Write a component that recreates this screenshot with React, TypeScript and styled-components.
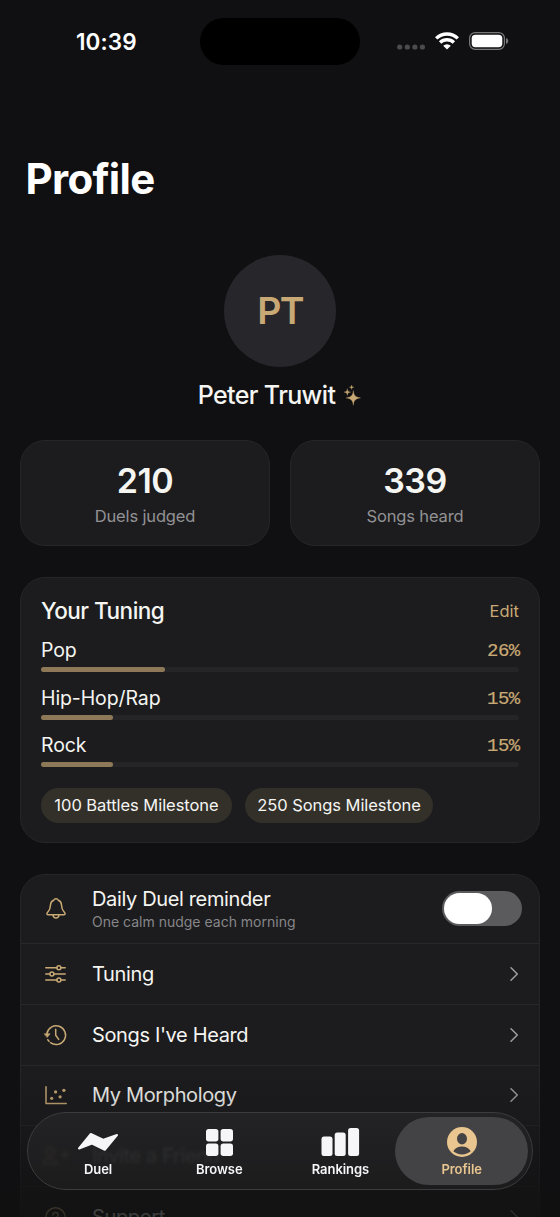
import React from "react";
import styled, { createGlobalStyle } from "styled-components";

const Global = createGlobalStyle`
  * { box-sizing: border-box; }
  html, body { margin: 0; padding: 0; background: #101012; }
  body { font-family: Inter, "Liberation Sans", sans-serif; color: #f5f5f2; overflow: hidden; }
  svg { display: block; flex: none; overflow: visible; }
`;

const gold = "#c8a975";

const Screen = styled.div`
  position: relative;
  width: 560px;
  height: 1217px;
  overflow: hidden;
  background: #101012;
  display: flex;
  flex-direction: column;
`;

const StatusBar = styled.header`
  flex: none;
  height: 82px;
  display: flex;
  align-items: center;
  padding: 0 52px 0 76px;
`;

const Clock = styled.div`
  width: 124px;
  font-size: 22.5px;
  font-weight: 600;
  letter-spacing: 0.1px;
  color: #fff;
  white-space: nowrap;
`;

const Island = styled.div`
  width: 160px;
  height: 47px;
  border-radius: 24px;
  background: #000;
`;

const StatusIcons = styled.div`
  width: 111px;
  margin-left: auto;
  display: flex;
  align-items: center;
  gap: 10px;
`;

const Title = styled.h1`
  flex: none;
  margin: 72px 0 0 25.5px;
  font-size: 42px;
  line-height: 50px;
  font-weight: 700;
  letter-spacing: -0.7px;
  color: #fff;
`;

const Identity = styled.section`
  flex: none;
  display: flex;
  flex-direction: column;
  align-items: center;
  margin-top: 50.5px;
`;

const Avatar = styled.div`
  width: 112px;
  height: 112px;
  border-radius: 50%;
  background: #27262b;
  color: ${gold};
  display: flex;
  align-items: center;
  justify-content: center;
  font-size: 37.5px;
  font-weight: 600;
  letter-spacing: -1.8px;
`;

const NameRow = styled.div`
  margin-top: 11.5px;
  margin-right: 1px;
  height: 34px;
  display: flex;
  align-items: center;
  gap: 9px;
`;

const Name = styled.span`
  font-size: 25px;
  line-height: 34px;
  font-weight: 500;
  letter-spacing: -0.62px;
  white-space: nowrap;
`;

const Card = styled.section`
  background: #1c1c1e;
  border: 1px solid #262628;
  border-radius: 25px;
`;

const Stats = styled.div`
  flex: none;
  display: grid;
  grid-template-columns: 1fr 1fr;
  gap: 20px;
  margin: 28px 20px 0;
`;

const StatCard = styled(Card)`
  height: 106px;
  padding-top: 19px;
  text-align: center;
`;

const StatValue = styled.div`
  font-size: 34px;
  line-height: 42px;
  font-weight: 600;
  letter-spacing: -0.5px;
`;

const StatLabel = styled.div`
  margin-top: 3px;
  font-size: 16.5px;
  line-height: 22px;
  letter-spacing: -0.15px;
  color: #929295;
`;

const TuningCard = styled(Card)`
  flex: none;
  height: 266px;
  margin: 31px 20px 0;
  padding: 17px 20px 0;
`;

const TuningHeader = styled.div`
  display: flex;
  align-items: center;
  justify-content: space-between;
  height: 31px;
  margin-bottom: 10px;
`;

const Heading = styled.h2`
  margin: 0;
  font-size: 22.5px;
  font-weight: 500;
  letter-spacing: -0.5px;
`;

const EditLink = styled.span`
  font-size: 16.5px;
  color: ${gold};
`;

const Genre = styled.div`
  height: 47.5px;
`;

const GenreLine = styled.div`
  display: flex;
  justify-content: space-between;
  align-items: center;
  height: 28px;
  margin-bottom: 3px;
`;

const GenreName = styled.span`
  font-size: 19.5px;
  letter-spacing: -0.1px;
`;

const Percent = styled.span`
  font-family: "Liberation Mono", monospace;
  font-size: 19px;
  line-height: 24px;
  padding-top: 2px;
  letter-spacing: -0.6px;
  margin-right: -0.5px;
  color: ${gold};
  -webkit-text-stroke: 0.2px ${gold};
`;

const Track = styled.div`
  height: 5px;
  border-radius: 3px;
  background: #252527;
`;

const Fill = styled.div`
  height: 5px;
  border-radius: 3px;
  background: #8d7957;
`;

const Chips = styled.div`
  display: flex;
  gap: 13px;
  margin-top: 9px;
`;

const Chip = styled.span<{ $width: number }>`
  width: ${(p) => p.$width}px;
  height: 35px;
  border-radius: 18px;
  background: #33302a;
  display: flex;
  align-items: center;
  justify-content: center;
  font-size: 16.5px;
  letter-spacing: -0.05px;
  white-space: nowrap;
`;

const Menu = styled(Card)`
  flex: none;
  height: 400px;
  margin: 31px 20px 0;
`;

const MenuRow = styled.div<{ $height?: number }>`
  height: ${(p) => p.$height ?? 60.8}px;
  display: flex;
  align-items: center;
  padding: 0 20px 0 20px;
  border-bottom: 1px solid #28282a;
`;

const IconSlot = styled.div`
  width: 29px;
  margin-right: 22px;
  display: flex;
  justify-content: center;
`;

const RowText = styled.div`
  flex: 1;
`;

const RowLabel = styled.div`
  font-size: 20px;
  line-height: 26px;
  letter-spacing: -0.36px;
`;

const RowNote = styled.div`
  font-size: 14px;
  line-height: 20px;
  letter-spacing: 0;
  color: #868689;
`;

const Toggle = styled.div`
  width: 80px;
  height: 35px;
  margin: 0 -3px 2px 0;
  padding: 2px;
  border-radius: 18px;
  background: #5b5b5e;
`;

const Knob = styled.div`
  width: 48px;
  height: 31px;
  border-radius: 16px;
  background: #fff;
`;

const Fade = styled.div`
  position: absolute;
  left: 0;
  right: 0;
  bottom: 0;
  height: 147px;
  background: linear-gradient(rgba(16, 16, 17, 0), rgba(16, 16, 17, 0.2) 30%, rgba(16, 16, 17, 0.6) 65%, rgba(16, 16, 17, 0.82));
`;

const TabBar = styled.nav`
  position: absolute;
  left: 27px;
  top: 1112px;
  width: 506px;
  height: 78px;
  padding: 0 9.5px;
  border: 1px solid #3c3c3e;
  border-radius: 39px;
  background: linear-gradient(rgba(37, 37, 39, 0.9), rgba(29, 29, 30, 0.84));
  backdrop-filter: blur(1.5px);
  display: flex;
  align-items: center;
`;

const Tab = styled.div<{ $active?: boolean }>`
  flex: 0 0 ${(p) => (p.$active ? 133.2 : 121.2)}px;
  height: 68px;
  margin: ${(p) => (p.$active ? "0 -6px" : "0")};
  border-radius: 34px;
  background: ${(p) => (p.$active ? "#434345" : "transparent")};
  color: ${(p) => (p.$active ? "#e9c58f" : "#f6f6f8")};
  display: flex;
  flex-direction: column;
  align-items: center;
  padding-top: 9px;
`;

const TabIcon = styled.div`
  height: 32px;
  display: flex;
  align-items: center;
`;

const TabLabel = styled.span`
  margin-top: 2px;
  font-size: 13px;
  line-height: 18px;
  font-weight: 600;
  letter-spacing: -0.05px;
`;

const stroke = { fill: "none", stroke: gold, strokeWidth: 1.5, strokeLinecap: "round", strokeLinejoin: "round" } as const;

const SignalDots = () => (
  <svg width="28" height="20" viewBox="0 0 28 20" fill="#4b4b4d">
    {[2.7, 10.3, 17.9, 25.4].map((x) => <circle key={x} cx={x} cy="16" r="2.6" />)}
  </svg>
);

const Wifi = () => (
  <svg width="24" height="18" viewBox="0 0 24 18" fill="none" stroke="#fff" strokeWidth="3.4">
    <path d="M1.2 6.4a15.5 15.5 0 0 1 21.6 0" />
    <path d="M5.1 10.5a9.9 9.9 0 0 1 13.8 0" />
    <path d="M8.2 13.8a5.2 5.2 0 0 1 7.6 0L12 17.6Z" fill="#fff" stroke="none" />
  </svg>
);

const Battery = () => (
  <svg width="40" height="18" viewBox="0 0 40 18">
    <rect x=".6" y=".6" width="34.8" height="16.8" rx="5.6" fill="none" stroke="#78787a" strokeWidth="1.2" />
    <rect x="2.7" y="2.7" width="30.6" height="12.6" rx="3.7" fill="#fff" />
    <path d="M37 6v6c1.5-.5 2.2-1.6 2.2-3S38.5 6.5 37 6Z" fill="#78787a" />
  </svg>
);

const Sparkles = () => (
  <svg width="17" height="21" viewBox="0 0 17 21" fill={gold} stroke={gold} strokeWidth=".3">
    <path d="M9.3 5.5C9.9 10.5 11 12 16.500 12.9C11 13.8 9.9 15.3 9.3 20.3C8.7 15.3 7.6 13.8 2.1 12.9C7.6 12 8.7 10.500 9.3 5.5Z" />
    <path d="M3.3 3.7C3.6 6 4.1 6.7 6.6 7.1C4.1 7.5 3.6 8.2 3.3 10.5C3 8.2 2.5 7.5 0 7.1C2.5 6.7 3 6 3.3 3.7Z" />
    <path d="M7.6 0C7.8 1.5 8.2 2 9.8 2.2C8.2 2.4 7.8 2.9 7.6 4.4C7.4 2.9 7 2.4 5.4 2.2C7 2 7.4 1.5 7.6 0Z" />
  </svg>
);

const Bell = () => (
  <svg width="20" height="21" viewBox="0 0 20 21" {...stroke}>
    <g transform="translate(0 -1)">
      <path d="M10 .8C8.7.8 8 1.4 7.7 2.2 5.6 3 4.6 4.700 4.500 7c-.2 3.2-.6 4.8-2.3 6.5-.8.8-1.300 1.500-1.300 2.300 0 .6.500.9 1.100.9h16c.6 0 1.100-.3 1.100-.9 0-.8-.5-1.500-1.300-2.300-1.700-1.700-2.100-3.300-2.300-6.500-.1-2.300-1.100-4-3.200-4.800C12 1.400 11.300.8 10 .8Z" />
      <path d="M7 17c.2 1.900 1.400 3.100 3 3.100s2.800-1.200 3-3.100" />
    </g>
  </svg>
);

const Sliders = () => (
  <svg width="21" height="18" viewBox="0 0 21 18" {...stroke}>
    <path d="M.8 2.7h11M16 2.7h4.2M.8 8.9h4M9 8.9h11.2M.8 15.1h11M16 15.1h4.2" />
    <circle cx="13.9" cy="2.7" r="2" />
    <circle cx="6.9" cy="8.9" r="2" />
    <circle cx="13.9" cy="15.1" r="2" />
  </svg>
);

const History = () => (
  <svg width="22" height="22" viewBox="0 0 22 22" {...stroke}>
    <g transform="translate(-.7 0)">
      <path d="M2.6 9.5A9.4 9.4 0 1 1 6.2 18.7M4.7 17.3 3.5 15.7" />
      <path d="M11.4 5.3v5.9l3 4.2" />
      <path d="M.2 9.8h5.6l-2.8 3.5Z" fill={gold} strokeWidth=".6" />
    </g>
  </svg>
);

const Scatter = () => (
  <svg width="22" height="19" viewBox="0 0 22 19">
    <path d="M1 .8v16.8h20.2" {...stroke} />
    <g fill={gold}>
      <circle cx="6.7" cy="12.3" r="1.6" />
      <circle cx="10.6" cy="5.9" r="1.6" />
      <circle cx="15.1" cy="10.8" r="1.6" />
      <circle cx="18.9" cy="4.3" r="1.6" />
    </g>
  </svg>
);

const Invite = () => (
  <svg width="28" height="20" viewBox="0 0 28 20" {...stroke} strokeWidth={2}>
    <circle cx="8" cy="6" r="4" />
    <path d="M1 18c0-7 14-7 14 0ZM19 9h8M23 5v8" />
  </svg>
);

const Help = () => (
  <svg width="21" height="21" viewBox="0 0 21 21" {...stroke}>
    <circle cx="10.5" cy="10.5" r="9.7" />
    <path d="M7.8 8c.2-3.3 5.4-3.2 5.4 0 0 2-2.7 2-2.7 4.2M10.5 15v.2" />
  </svg>
);

const Chevron = () => (
  <svg width="8" height="14" viewBox="0 0 8 14" fill="none" stroke="#a0a0a2" strokeWidth="1.5" strokeLinecap="round" strokeLinejoin="round">
    <path d="M0 .8 6.3 7 0 13.2" />
  </svg>
);

const DuelIcon = () => (
  <svg width="40" height="20" viewBox="0 0 40 20" fill="currentColor" stroke="currentColor" strokeWidth="2" strokeLinejoin="round">
    <path d="M1 16.5 12.8 2 25.5 7.8 39 3 26.8 17.800 14 11.5Z" />
  </svg>
);

const BrowseIcon = () => (
  <svg width="27" height="27" viewBox="0 0 27 27" fill="currentColor">
    {[0, 14.6].map((y) => [0, 14.6].map((x) => <rect key={`${x}${y}`} x={x} y={y} width="12.4" height="12.4" rx="2.7" />))}
  </svg>
);

const RankingsIcon = () => (
  <svg width="38" height="28" viewBox="0 0 38 28" fill="currentColor">
    <rect x="0.5" y="8.6" width="11" height="19.4" rx="2.5" />
    <rect x="13.7" y="4.4" width="11" height="23.6" rx="2.5" />
    <rect x="27.1" y="0" width="11" height="28" rx="2.5" />
  </svg>
);

const ProfileIcon = () => (
  <svg width="30" height="30" viewBox="0 0 30 30">
    <circle cx="15" cy="15" r="15" fill="currentColor" />
    <ellipse cx="15" cy="11.7" rx="5" ry="5.7" fill="#434345" />
    <path d="M6.3 24.3c1.5-3.3 4.8-4.8 8.7-4.8s7.2 1.5 8.7 4.8c-2.3 2-5.3 3.2-8.7 3.2s-6.4-1.2-8.7-3.2Z" fill="#434345" />
  </svg>
);

const genres = [
  { name: "Pop", share: 26 },
  { name: "Hip-Hop/Rap", share: 15 },
  { name: "Rock", share: 15 },
];

const links = [
  { label: "Tuning", Icon: Sliders },
  { label: "Songs I've Heard", Icon: History },
  { label: "My Morphology", Icon: Scatter },
  { label: "Invite a Friend", Icon: Invite },
  { label: "Support", Icon: Help },
];

const tabs = [
  { label: "Duel", Icon: DuelIcon },
  { label: "Browse", Icon: BrowseIcon },
  { label: "Rankings", Icon: RankingsIcon },
  { label: "Profile", Icon: ProfileIcon, active: true },
];

export default function App() {
  return (
    <Screen>
      <Global />
      <StatusBar>
        <Clock>10:39</Clock>
        <Island />
        <StatusIcons><SignalDots /><Wifi /><Battery /></StatusIcons>
      </StatusBar>
      <Title>Profile</Title>
      <Identity>
        <Avatar>PT</Avatar>
        <NameRow><Name>Peter Truwit</Name><Sparkles /></NameRow>
      </Identity>
      <Stats>
        <StatCard><StatValue>210</StatValue><StatLabel>Duels judged</StatLabel></StatCard>
        <StatCard><StatValue>339</StatValue><StatLabel>Songs heard</StatLabel></StatCard>
      </Stats>
      <TuningCard>
        <TuningHeader><Heading>Your Tuning</Heading><EditLink>Edit</EditLink></TuningHeader>
        {genres.map((g) => (
          <Genre key={g.name}>
            <GenreLine><GenreName>{g.name}</GenreName><Percent>{g.share}%</Percent></GenreLine>
            <Track><Fill style={{ width: `${g.share}%` }} /></Track>
          </Genre>
        ))}
        <Chips>
          <Chip $width={191}>100 Battles Milestone</Chip>
          <Chip $width={188}>250 Songs Milestone</Chip>
        </Chips>
      </TuningCard>
      <Menu>
        <MenuRow $height={69}>
          <IconSlot><Bell /></IconSlot>
          <RowText>
            <RowLabel>Daily Duel reminder</RowLabel>
            <RowNote>One calm nudge each morning</RowNote>
          </RowText>
          <Toggle><Knob /></Toggle>
        </MenuRow>
        {links.map(({ label, Icon }) => (
          <MenuRow key={label}>
            <IconSlot><Icon /></IconSlot>
            <RowText><RowLabel>{label}</RowLabel></RowText>
            <Chevron />
          </MenuRow>
        ))}
      </Menu>
      <Fade />
      <TabBar>
        {tabs.map(({ label, Icon, active }) => (
          <Tab key={label} $active={active}>
            <TabIcon><Icon /></TabIcon>
            <TabLabel>{label}</TabLabel>
          </Tab>
        ))}
      </TabBar>
    </Screen>
  );
}
